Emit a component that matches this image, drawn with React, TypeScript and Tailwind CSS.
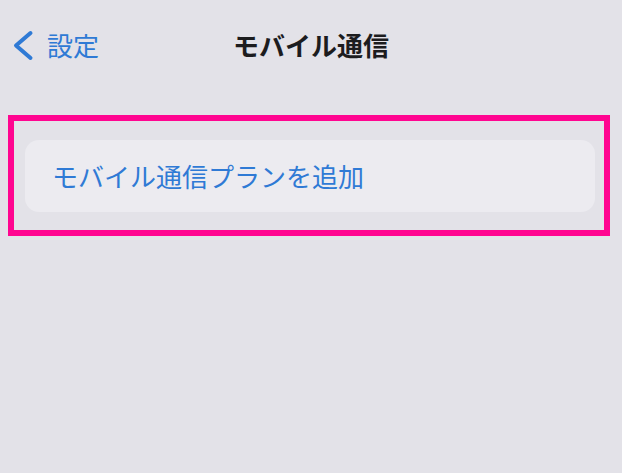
const ChevronLeftIcon = () => (
    <svg width="22" height="31" viewBox="0 0 22 31" fill="none">
        <polyline
            points="18.5,3 4,15.5 18.5,28"
            stroke="currentColor"
            strokeWidth="4"
            strokeLinecap="round"
            strokeLinejoin="round"
        />
    </svg>
);

export default function App() {
    return (
        <div
            className="w-[622px] h-[473px] bg-[#e3e2e8] flex flex-col overflow-hidden"
            style={{ fontFamily: '"Noto Sans CJK JP", "Noto Sans", sans-serif' }}
        >
            <div className="h-[90px] grid grid-cols-[1fr_auto_1fr] items-center">
                <div className="flex items-center pl-[12px] text-[#2f7ad5]">
                    <ChevronLeftIcon />
                    <span className="ml-[13px] text-[26px] leading-none">設定</span>
                </div>
                <span className="text-[26px] font-bold leading-none text-[#1c1c1e]">
                    モバイル通信
                </span>
                <div />
            </div>
            <div className="mt-[25px] ml-[8px] mr-[12px] border-[6px] border-[#ff0590] pt-[19px] pb-[18px] pl-[11px] pr-[9px]">
                <div className="h-[72px] rounded-[14px] bg-[#ecebf0] flex items-center pl-[27px]">
                    <span className="text-[26px] leading-none text-[#2f7ad5]">
                        モバイル通信プランを追加
                    </span>
                </div>
            </div>
        </div>
    );
}
